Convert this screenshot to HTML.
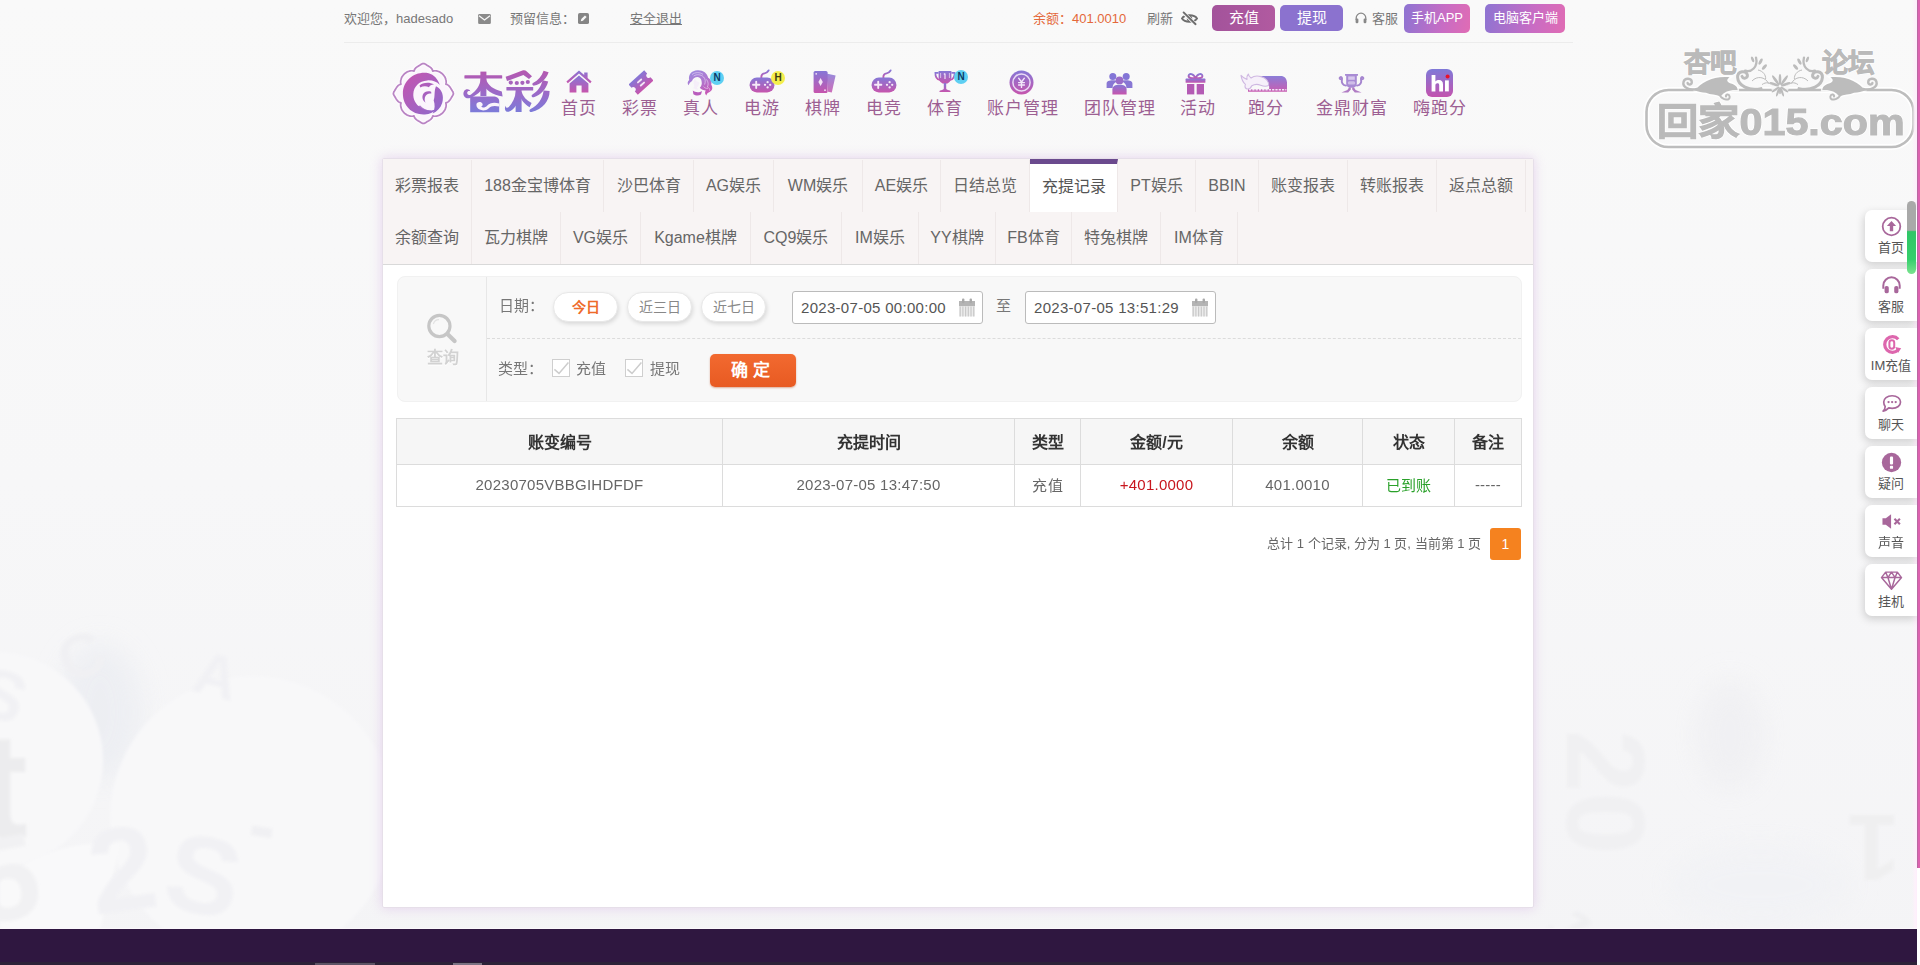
<!DOCTYPE html>
<html lang="zh-CN">
<head>
<meta charset="utf-8">
<title>充提记录</title>
<style>
*{box-sizing:border-box;margin:0;padding:0}
html,body{width:1920px;height:965px;overflow:hidden}
body{position:relative;background:#f8f8f8;font-family:"Liberation Sans",sans-serif;color:#666;font-size:13px}
.abs{position:absolute}
a{color:inherit;text-decoration:none}
/* ---------- top bar ---------- */
#topbar{position:absolute;left:345px;top:0;width:1228px;height:43px}
#topbar:after{content:"";position:absolute;left:-1px;top:42px;width:1229px;height:1px;background:#ececec}
#topbar .t{position:absolute;top:10.5px;height:16px;line-height:16px;font-size:13px;color:#777;white-space:nowrap}
.tbtn{position:absolute;top:5px;height:26px;line-height:26px;border-radius:5px;color:#fff;font-size:15px;text-align:center;white-space:nowrap}
/* ---------- nav ---------- */
.nav{position:absolute;top:98.5px;height:20px;line-height:20px;font-size:17px;letter-spacing:1px;color:#9d5f93;white-space:nowrap;transform:translateX(-50%)}
.nico{position:absolute}
.badge{position:absolute;width:14px;height:14px;border-radius:7px;font-size:10px;font-weight:bold;line-height:14px;text-align:center}
/* ---------- panel ---------- */
#panel{position:absolute;left:382px;top:158px;width:1152px;height:750px;background:#fff;border:1px solid #e6dfe9;border-radius:2px;box-shadow:0 0 12px rgba(205,160,222,.42)}
#tabs{position:absolute;left:0;top:0;width:1150px;height:106px;background:#f8f4f4;border-bottom:1px solid #d9d9d9}
.tab{position:absolute;height:52px;line-height:52px;font-size:16px;color:#666;text-align:center;border-right:1px solid #eee8e8;white-space:nowrap}
.tab.r1{top:1px}
.tab.r2{top:53px}
.tab.on{background:#fff;border-top:5px solid #6b4a8e;top:0;height:53px;line-height:45px;color:#555}
/* ---------- filter ---------- */
#filter{position:absolute;left:14px;top:117px;width:1125px;height:126px;background:#f8f8f8;border-radius:8px;border:1px solid #f1f1f1}
#filter .lcell{position:absolute;left:0;top:0;width:89px;height:124px;border-right:1px solid #e7e7e7}
#filter .dash{position:absolute;left:89px;top:61px;width:1034px;border-top:1px dashed #dcdcdc}
.lbl{position:absolute;font-size:15px;color:#777;white-space:nowrap;line-height:20px}
.pill{position:absolute;top:15px;height:30px;line-height:28px;width:65px;border-radius:15px;background:#fff;border:1px solid #e8e8e8;box-shadow:1px 2px 4px rgba(0,0,0,.13);font-size:14px;text-align:center;color:#888}
.inp{position:absolute;top:14px;height:33px;width:191px;background:#fff;border:1px solid #bbb;border-radius:3px;font-size:15px;line-height:31px;padding-left:8px;color:#555;white-space:nowrap;letter-spacing:.3px}
.cal{position:absolute;right:7px;top:6px}
.cb{position:absolute;top:82px;width:18px;height:18px;background:#fff;border:1px solid #cfcfcf}
#ok{position:absolute;left:312px;top:77px;width:86px;height:33px;border-radius:5px;background:linear-gradient(#f26a30,#e85a22);color:#fff;font-size:17px;font-weight:bold;line-height:33px;text-align:center;letter-spacing:5px;text-indent:0;box-shadow:0 1px 2px rgba(180,60,10,.4)}
/* ---------- table ---------- */
#tbl{position:absolute;left:13px;top:259px;width:1125px;border-collapse:collapse;table-layout:fixed}
#tbl th{height:46px;padding-bottom:2px;background:#f6f6f6;border:1px solid #dcdcdc;font-size:16px;color:#333;font-weight:bold;text-align:center}
#tbl td{height:42px;padding-bottom:2px;letter-spacing:.25px;border:1px solid #dcdcdc;font-size:15px;color:#666;text-align:center;background:#fff}
.wmt{position:absolute;font-weight:bold;color:#bababa;white-space:nowrap;text-shadow:0 0 2px #fff,1px 1px 0 #fff,-1px -1px 0 #fff,1px -1px 0 #fff,-1px 1px 0 #fff}
/* ---------- sidebar ---------- */
.sb{position:absolute;left:1865px;width:52px;height:52px;z-index:3;background:#fff;border-radius:7px 0 0 7px;box-shadow:-1px 3px 8px rgba(0,0,0,.17)}
.sb span{position:absolute;left:0;width:52px;top:30px;text-align:center;font-size:13px;line-height:16px;color:#555;white-space:nowrap}
.sb svg{position:absolute;left:50%;top:6px;margin-left:-10.5px;width:21px;height:21px}
</style>
</head>
<body>
<svg width="0" height="0" style="position:absolute"><defs>
<linearGradient id="g" x1="0" y1="0" x2="0" y2="1"><stop offset="0" stop-color="#8677d6"/><stop offset="1" stop-color="#c655ad"/></linearGradient>
<linearGradient id="gl" x1="0" y1="0" x2="1" y2="1"><stop offset="0" stop-color="#c95bb0"/><stop offset="1" stop-color="#8a76d4"/></linearGradient>
<linearGradient id="gt" x1="0" y1="0" x2="0" y2="1"><stop offset="0" stop-color="#b657a8"/><stop offset="1" stop-color="#7f79d8"/></linearGradient>
</defs></svg>
<!-- BACKGROUND -->
<svg class="abs" style="left:0;top:0;z-index:0" width="1920" height="965" viewBox="0 0 1920 965">
  <defs>
    <linearGradient id="bgv" x1="0" y1="0" x2="0" y2="1"><stop offset="0" stop-color="#f9f9f9"/><stop offset=".5" stop-color="#f7f7f8"/><stop offset="1" stop-color="#f4f4f6"/></linearGradient>
    <filter id="b6" x="-30%" y="-30%" width="160%" height="160%"><feGaussianBlur stdDeviation="6"/></filter>
    <filter id="b2" x="-30%" y="-30%" width="160%" height="160%"><feGaussianBlur stdDeviation="1.6"/></filter>
    <filter id="b14" x="-30%" y="-30%" width="160%" height="160%"><feGaussianBlur stdDeviation="14"/></filter>
  </defs>
  <rect width="1920" height="965" fill="url(#bgv)"/>
  <!-- left -->
  <ellipse cx="100" cy="712" rx="42" ry="68" fill="#ebedf2" filter="url(#b14)" opacity=".8"/>
  <circle cx="-5" cy="760" r="108" fill="#f8f8f9" filter="url(#b2)"/>
  <circle cx="252" cy="818" r="142" fill="#f8f8f9" filter="url(#b2)"/>
  <path d="M0 880 C40 850 80 840 120 845 L100 929 H0 Z" fill="#f9f9fa" filter="url(#b2)"/>
  <g font-family="Liberation Sans, sans-serif" font-weight="bold" fill="#efeff1" filter="url(#b2)">
    <text x="-22" y="838" font-size="150" fill="#ececee">t</text>
    <text transform="translate(70 685) rotate(-25)" font-size="62" fill="#f0f0f3">C</text>
    <text transform="translate(190 690) rotate(15)" font-size="60" fill="#f1f1f4">A</text>
    <text transform="translate(95 915) rotate(-8)" font-size="120" fill="#f1f1f4">2</text>
    <text transform="translate(160 905) rotate(12)" font-size="110" fill="#f1f1f4">S</text>
    <text transform="translate(245 850) rotate(10)" font-size="80" fill="#f0f0f3">-</text>
    <text transform="translate(-20 925) rotate(-10)" font-size="120" fill="#f1f1f3">5</text>
    <text transform="translate(-28 710) rotate(20)" font-size="70" fill="#f1f1f4">S</text>
  </g>
  <!-- right -->
  <ellipse cx="1730" cy="735" rx="34" ry="55" fill="#efeff2" filter="url(#b14)" opacity=".8"/>
  <ellipse cx="1760" cy="885" rx="90" ry="40" fill="#f1f2f5" filter="url(#b14)" opacity=".8"/>
  <g font-family="Liberation Sans, sans-serif" font-weight="bold" fill="#f0f0f2" filter="url(#b2)">
    <text transform="translate(1567 730) rotate(90)" font-size="112">20</text>
    <text transform="translate(1900 815) rotate(180)" font-size="95" fill="#efeff0">1</text>
    <text transform="translate(1545 925) rotate(60)" font-size="60" fill="#efeff1">1</text>
  </g>
</svg>
<!-- top bar -->
<div id="topbar">
  <div class="t" style="left:-1px">欢迎您，hadesado</div>

  <!-- envelope -->
  <svg class="abs" style="left:133px;top:14px" width="13" height="10" viewBox="0 0 14 11"><rect x="0" y="0" width="14" height="11" rx="1.5" fill="#8a8a8a"/><path d="M1 2 L7 6.6 L13 2" fill="none" stroke="#f8f8f8" stroke-width="1.4"/></svg>
  <!-- edit -->
  <svg class="abs" style="left:233px;top:13px" width="11" height="11" viewBox="0 0 12 12"><rect width="12" height="12" rx="2" fill="#858585"/><path d="M3 9 L3.6 6.6 L7.6 2.6 L9.4 4.4 L5.4 8.4 Z" fill="#f8f8f8"/></svg>
  <!-- eye slash -->
  <svg class="abs" style="left:836px;top:11px" width="17" height="15" viewBox="0 0 17 15"><path d="M1 7.5 C3.5 3.2 13.5 3.2 16 7.5 C13.5 11.8 3.5 11.8 1 7.5 Z" fill="none" stroke="#6d6d6d" stroke-width="1.9"/><circle cx="8.5" cy="7.5" r="2.7" fill="#6d6d6d"/><path d="M2.2 1.6 L14.8 13.4" stroke="#f8f8f8" stroke-width="3.4"/><path d="M2.6 1.4 L14.6 13.2" stroke="#6d6d6d" stroke-width="1.9" stroke-linecap="round"/></svg>
  <!-- headset -->
  <svg class="abs" style="left:1010px;top:12px" width="12" height="12" viewBox="0 0 12 12"><path d="M1.2 8 V6 A4.8 4.8 0 0 1 10.8 6 V8" fill="none" stroke="#888" stroke-width="1.3"/><rect x="0.6" y="6.6" width="2.8" height="4.6" rx="1.2" fill="#888"/><rect x="8.6" y="6.6" width="2.8" height="4.6" rx="1.2" fill="#888"/></svg>
  <div class="t" style="left:165px">预留信息：</div>
  <div class="t" style="left:285px;text-decoration:underline">安全退出</div>
  <div class="t" style="left:688px;color:#e4683a">余额：401.0010</div>
  <div class="t" style="left:802px">刷新</div>
  <div class="tbtn" style="left:867px;width:63px;background:linear-gradient(90deg,#a3539b,#b15aa0)">充值</div>
  <div class="tbtn" style="left:935px;width:63px;background:#8b72cf">提现</div>
  <div class="t" style="left:1027px">客服</div>
  <div class="tbtn" style="left:1059px;top:4px;width:66px;height:29px;line-height:27px;font-size:13px;background:linear-gradient(100deg,#8d74d2,#c86cc4 60%,#e06cb4)">手机APP</div>
  <div class="tbtn" style="left:1140px;top:4px;width:80px;height:29px;line-height:27px;font-size:13px;background:linear-gradient(100deg,#8d74d2,#c86cc4 60%,#e06cb4)">电脑客户端</div>
</div>

<!-- LOGO -->
<svg class="abs" style="left:390px;top:60px" width="164" height="68" viewBox="0 0 164 68">
  <defs><linearGradient id="lt" gradientUnits="userSpaceOnUse" x1="0" y1="11" x2="0" y2="52"><stop offset="0" stop-color="#b458b0"/><stop offset=".55" stop-color="#9a6ac8"/><stop offset="1" stop-color="#7c7bd9"/></linearGradient>
  <linearGradient id="le" gradientUnits="userSpaceOnUse" x1="14" y1="14" x2="52" y2="54"><stop offset="0" stop-color="#c456b0"/><stop offset="1" stop-color="#8f68cc"/></linearGradient></defs>
  <g transform="translate(33.4 33.5) scale(.968) translate(-33.4 -33.5)">
  <path d="M33.4 2.5 L33.9 2.6 L34.5 2.7 L35.0 3.0 L35.5 3.2 L36.0 3.6 L36.5 3.9 L37.0 4.2 L37.5 4.5 L37.9 4.8 L38.4 5.0 L38.9 5.3 L39.3 5.6 L39.8 5.9 L40.2 6.2 L40.6 6.5 L41.0 6.9 L41.4 7.2 L41.8 7.7 L42.1 8.1 L42.5 8.6 L42.7 9.2 L42.9 10.0 L43.2 10.4 L43.8 10.2 L44.3 10.1 L44.9 10.0 L45.4 10.0 L45.9 10.0 L46.4 10.1 L46.9 10.1 L47.4 10.2 L47.9 10.4 L48.3 10.5 L48.8 10.7 L49.3 10.8 L49.7 11.0 L50.2 11.2 L50.6 11.5 L51.0 11.7 L51.4 12.0 L51.8 12.3 L52.2 12.6 L52.6 12.9 L53.0 13.2 L53.3 13.6 L53.7 13.9 L54.0 14.3 L54.3 14.7 L54.6 15.1 L54.9 15.5 L55.2 15.9 L55.4 16.3 L55.7 16.7 L55.9 17.2 L56.1 17.6 L56.2 18.1 L56.4 18.6 L56.5 19.0 L56.7 19.5 L56.8 20.0 L56.8 20.5 L56.9 21.0 L56.9 21.5 L56.9 22.0 L56.8 22.6 L56.7 23.1 L56.5 23.7 L56.9 24.0 L57.7 24.2 L58.3 24.4 L58.8 24.8 L59.2 25.1 L59.7 25.5 L60.0 25.9 L60.4 26.3 L60.7 26.7 L61.0 27.1 L61.3 27.6 L61.6 28.0 L61.9 28.5 L62.1 29.0 L62.4 29.4 L62.7 29.9 L63.0 30.4 L63.3 30.9 L63.7 31.4 L63.9 31.9 L64.2 32.4 L64.3 33.0 L64.4 33.5 L64.3 34.0 L64.2 34.6 L63.9 35.1 L63.7 35.6 L63.3 36.1 L63.0 36.6 L62.7 37.1 L62.4 37.6 L62.1 38.0 L61.9 38.5 L61.6 39.0 L61.3 39.4 L61.0 39.9 L60.7 40.3 L60.4 40.7 L60.0 41.1 L59.7 41.5 L59.2 41.9 L58.8 42.2 L58.3 42.6 L57.7 42.8 L56.9 43.0 L56.5 43.3 L56.7 43.9 L56.8 44.4 L56.9 45.0 L56.9 45.5 L56.9 46.0 L56.8 46.5 L56.8 47.0 L56.7 47.5 L56.5 48.0 L56.4 48.4 L56.2 48.9 L56.1 49.4 L55.9 49.8 L55.7 50.3 L55.4 50.7 L55.2 51.1 L54.9 51.5 L54.6 51.9 L54.3 52.3 L54.0 52.7 L53.7 53.1 L53.3 53.4 L53.0 53.8 L52.6 54.1 L52.2 54.4 L51.8 54.7 L51.4 55.0 L51.0 55.3 L50.6 55.5 L50.2 55.8 L49.7 56.0 L49.3 56.2 L48.8 56.3 L48.3 56.5 L47.9 56.6 L47.4 56.8 L46.9 56.9 L46.4 56.9 L45.9 57.0 L45.4 57.0 L44.9 57.0 L44.3 56.9 L43.8 56.8 L43.2 56.6 L42.9 57.0 L42.7 57.8 L42.5 58.4 L42.1 58.9 L41.8 59.3 L41.4 59.8 L41.0 60.1 L40.6 60.5 L40.2 60.8 L39.8 61.1 L39.3 61.4 L38.9 61.7 L38.4 62.0 L37.9 62.2 L37.5 62.5 L37.0 62.8 L36.5 63.1 L36.0 63.4 L35.5 63.8 L35.0 64.0 L34.5 64.3 L33.9 64.4 L33.4 64.5 L32.9 64.4 L32.3 64.3 L31.8 64.0 L31.3 63.8 L30.8 63.4 L30.3 63.1 L29.8 62.8 L29.3 62.5 L28.9 62.2 L28.4 62.0 L27.9 61.7 L27.5 61.4 L27.0 61.1 L26.6 60.8 L26.2 60.5 L25.8 60.1 L25.4 59.8 L25.0 59.3 L24.7 58.9 L24.3 58.4 L24.1 57.8 L23.9 57.0 L23.6 56.6 L23.0 56.8 L22.5 56.9 L21.9 57.0 L21.4 57.0 L20.9 57.0 L20.4 56.9 L19.9 56.9 L19.4 56.8 L18.9 56.6 L18.5 56.5 L18.0 56.3 L17.5 56.2 L17.1 56.0 L16.6 55.8 L16.2 55.5 L15.8 55.3 L15.4 55.0 L15.0 54.7 L14.6 54.4 L14.2 54.1 L13.8 53.8 L13.5 53.4 L13.1 53.1 L12.8 52.7 L12.5 52.3 L12.2 51.9 L11.9 51.5 L11.6 51.1 L11.4 50.7 L11.1 50.3 L10.9 49.8 L10.7 49.4 L10.6 48.9 L10.4 48.4 L10.3 48.0 L10.1 47.5 L10.0 47.0 L10.0 46.5 L9.9 46.0 L9.9 45.5 L9.9 45.0 L10.0 44.4 L10.1 43.9 L10.3 43.3 L9.9 43.0 L9.1 42.8 L8.5 42.6 L8.0 42.2 L7.6 41.9 L7.1 41.5 L6.8 41.1 L6.4 40.7 L6.1 40.3 L5.8 39.9 L5.5 39.4 L5.2 39.0 L4.9 38.5 L4.7 38.0 L4.4 37.6 L4.1 37.1 L3.8 36.6 L3.5 36.1 L3.1 35.6 L2.9 35.1 L2.6 34.6 L2.5 34.0 L2.4 33.5 L2.5 33.0 L2.6 32.4 L2.9 31.9 L3.1 31.4 L3.5 30.9 L3.8 30.4 L4.1 29.9 L4.4 29.4 L4.7 29.0 L4.9 28.5 L5.2 28.0 L5.5 27.6 L5.8 27.1 L6.1 26.7 L6.4 26.3 L6.8 25.9 L7.1 25.5 L7.6 25.1 L8.0 24.8 L8.5 24.4 L9.1 24.2 L9.9 24.0 L10.3 23.7 L10.1 23.1 L10.0 22.6 L9.9 22.0 L9.9 21.5 L9.9 21.0 L10.0 20.5 L10.0 20.0 L10.1 19.5 L10.3 19.0 L10.4 18.6 L10.6 18.1 L10.7 17.6 L10.9 17.2 L11.1 16.7 L11.4 16.3 L11.6 15.9 L11.9 15.5 L12.2 15.1 L12.5 14.7 L12.8 14.3 L13.1 13.9 L13.5 13.6 L13.8 13.2 L14.2 12.9 L14.6 12.6 L15.0 12.3 L15.4 12.0 L15.8 11.7 L16.2 11.5 L16.6 11.2 L17.1 11.0 L17.5 10.8 L18.0 10.7 L18.5 10.5 L18.9 10.4 L19.4 10.2 L19.9 10.1 L20.4 10.1 L20.9 10.0 L21.4 10.0 L21.9 10.0 L22.5 10.1 L23.0 10.2 L23.6 10.4 L23.9 10.0 L24.1 9.2 L24.3 8.6 L24.7 8.1 L25.0 7.7 L25.4 7.2 L25.8 6.9 L26.2 6.5 L26.6 6.2 L27.0 5.9 L27.5 5.6 L27.9 5.3 L28.4 5.0 L28.9 4.8 L29.3 4.5 L29.8 4.2 L30.3 3.9 L30.8 3.6 L31.3 3.2 L31.8 3.0 L32.3 2.7 L32.9 2.6 Z" fill="#fbf5fc" stroke="#fdfafd" stroke-width="4.5" stroke-linejoin="round"/>
  <path d="M33.4 2.5 L33.9 2.6 L34.5 2.7 L35.0 3.0 L35.5 3.2 L36.0 3.6 L36.5 3.9 L37.0 4.2 L37.5 4.5 L37.9 4.8 L38.4 5.0 L38.9 5.3 L39.3 5.6 L39.8 5.9 L40.2 6.2 L40.6 6.5 L41.0 6.9 L41.4 7.2 L41.8 7.7 L42.1 8.1 L42.5 8.6 L42.7 9.2 L42.9 10.0 L43.2 10.4 L43.8 10.2 L44.3 10.1 L44.9 10.0 L45.4 10.0 L45.9 10.0 L46.4 10.1 L46.9 10.1 L47.4 10.2 L47.9 10.4 L48.3 10.5 L48.8 10.7 L49.3 10.8 L49.7 11.0 L50.2 11.2 L50.6 11.5 L51.0 11.7 L51.4 12.0 L51.8 12.3 L52.2 12.6 L52.6 12.9 L53.0 13.2 L53.3 13.6 L53.7 13.9 L54.0 14.3 L54.3 14.7 L54.6 15.1 L54.9 15.5 L55.2 15.9 L55.4 16.3 L55.7 16.7 L55.9 17.2 L56.1 17.6 L56.2 18.1 L56.4 18.6 L56.5 19.0 L56.7 19.5 L56.8 20.0 L56.8 20.5 L56.9 21.0 L56.9 21.5 L56.9 22.0 L56.8 22.6 L56.7 23.1 L56.5 23.7 L56.9 24.0 L57.7 24.2 L58.3 24.4 L58.8 24.8 L59.2 25.1 L59.7 25.5 L60.0 25.9 L60.4 26.3 L60.7 26.7 L61.0 27.1 L61.3 27.6 L61.6 28.0 L61.9 28.5 L62.1 29.0 L62.4 29.4 L62.7 29.9 L63.0 30.4 L63.3 30.9 L63.7 31.4 L63.9 31.9 L64.2 32.4 L64.3 33.0 L64.4 33.5 L64.3 34.0 L64.2 34.6 L63.9 35.1 L63.7 35.6 L63.3 36.1 L63.0 36.6 L62.7 37.1 L62.4 37.6 L62.1 38.0 L61.9 38.5 L61.6 39.0 L61.3 39.4 L61.0 39.9 L60.7 40.3 L60.4 40.7 L60.0 41.1 L59.7 41.5 L59.2 41.9 L58.8 42.2 L58.3 42.6 L57.7 42.8 L56.9 43.0 L56.5 43.3 L56.7 43.9 L56.8 44.4 L56.9 45.0 L56.9 45.5 L56.9 46.0 L56.8 46.5 L56.8 47.0 L56.7 47.5 L56.5 48.0 L56.4 48.4 L56.2 48.9 L56.1 49.4 L55.9 49.8 L55.7 50.3 L55.4 50.7 L55.2 51.1 L54.9 51.5 L54.6 51.9 L54.3 52.3 L54.0 52.7 L53.7 53.1 L53.3 53.4 L53.0 53.8 L52.6 54.1 L52.2 54.4 L51.8 54.7 L51.4 55.0 L51.0 55.3 L50.6 55.5 L50.2 55.8 L49.7 56.0 L49.3 56.2 L48.8 56.3 L48.3 56.5 L47.9 56.6 L47.4 56.8 L46.9 56.9 L46.4 56.9 L45.9 57.0 L45.4 57.0 L44.9 57.0 L44.3 56.9 L43.8 56.8 L43.2 56.6 L42.9 57.0 L42.7 57.8 L42.5 58.4 L42.1 58.9 L41.8 59.3 L41.4 59.8 L41.0 60.1 L40.6 60.5 L40.2 60.8 L39.8 61.1 L39.3 61.4 L38.9 61.7 L38.4 62.0 L37.9 62.2 L37.5 62.5 L37.0 62.8 L36.5 63.1 L36.0 63.4 L35.5 63.8 L35.0 64.0 L34.5 64.3 L33.9 64.4 L33.4 64.5 L32.9 64.4 L32.3 64.3 L31.8 64.0 L31.3 63.8 L30.8 63.4 L30.3 63.1 L29.8 62.8 L29.3 62.5 L28.9 62.2 L28.4 62.0 L27.9 61.7 L27.5 61.4 L27.0 61.1 L26.6 60.8 L26.2 60.5 L25.8 60.1 L25.4 59.8 L25.0 59.3 L24.7 58.9 L24.3 58.4 L24.1 57.8 L23.9 57.0 L23.6 56.6 L23.0 56.8 L22.5 56.9 L21.9 57.0 L21.4 57.0 L20.9 57.0 L20.4 56.9 L19.9 56.9 L19.4 56.8 L18.9 56.6 L18.5 56.5 L18.0 56.3 L17.5 56.2 L17.1 56.0 L16.6 55.8 L16.2 55.5 L15.8 55.3 L15.4 55.0 L15.0 54.7 L14.6 54.4 L14.2 54.1 L13.8 53.8 L13.5 53.4 L13.1 53.1 L12.8 52.7 L12.5 52.3 L12.2 51.9 L11.9 51.5 L11.6 51.1 L11.4 50.7 L11.1 50.3 L10.9 49.8 L10.7 49.4 L10.6 48.9 L10.4 48.4 L10.3 48.0 L10.1 47.5 L10.0 47.0 L10.0 46.5 L9.9 46.0 L9.9 45.5 L9.9 45.0 L10.0 44.4 L10.1 43.9 L10.3 43.3 L9.9 43.0 L9.1 42.8 L8.5 42.6 L8.0 42.2 L7.6 41.9 L7.1 41.5 L6.8 41.1 L6.4 40.7 L6.1 40.3 L5.8 39.9 L5.5 39.4 L5.2 39.0 L4.9 38.5 L4.7 38.0 L4.4 37.6 L4.1 37.1 L3.8 36.6 L3.5 36.1 L3.1 35.6 L2.9 35.1 L2.6 34.6 L2.5 34.0 L2.4 33.5 L2.5 33.0 L2.6 32.4 L2.9 31.9 L3.1 31.4 L3.5 30.9 L3.8 30.4 L4.1 29.9 L4.4 29.4 L4.7 29.0 L4.9 28.5 L5.2 28.0 L5.5 27.6 L5.8 27.1 L6.1 26.7 L6.4 26.3 L6.8 25.9 L7.1 25.5 L7.6 25.1 L8.0 24.8 L8.5 24.4 L9.1 24.2 L9.9 24.0 L10.3 23.7 L10.1 23.1 L10.0 22.6 L9.9 22.0 L9.9 21.5 L9.9 21.0 L10.0 20.5 L10.0 20.0 L10.1 19.5 L10.3 19.0 L10.4 18.6 L10.6 18.1 L10.7 17.6 L10.9 17.2 L11.1 16.7 L11.4 16.3 L11.6 15.9 L11.9 15.5 L12.2 15.1 L12.5 14.7 L12.8 14.3 L13.1 13.9 L13.5 13.6 L13.8 13.2 L14.2 12.9 L14.6 12.6 L15.0 12.3 L15.4 12.0 L15.8 11.7 L16.2 11.5 L16.6 11.2 L17.1 11.0 L17.5 10.8 L18.0 10.7 L18.5 10.5 L18.9 10.4 L19.4 10.2 L19.9 10.1 L20.4 10.1 L20.9 10.0 L21.4 10.0 L21.9 10.0 L22.5 10.1 L23.0 10.2 L23.6 10.4 L23.9 10.0 L24.1 9.2 L24.3 8.6 L24.7 8.1 L25.0 7.7 L25.4 7.2 L25.8 6.9 L26.2 6.5 L26.6 6.2 L27.0 5.9 L27.5 5.6 L27.9 5.3 L28.4 5.0 L28.9 4.8 L29.3 4.5 L29.8 4.2 L30.3 3.9 L30.8 3.6 L31.3 3.2 L31.8 3.0 L32.3 2.7 L32.9 2.6 Z" fill="none" stroke="#b984c4" stroke-width="1.8" stroke-linejoin="round"/>
  <!-- swirl G -->
  <g fill="url(#le)">
  <path d="M38.8 12.6 C25.4 10 12.2 19.2 12.2 33.6 C12.2 46.8 22.4 56 35 55.2 C40 54.8 44.4 52.6 47.6 49.2 C42 52 35.6 51.6 30.6 48.2 C25.4 44.8 22.6 39.6 23 33.8 C23.4 26.4 28.8 20.6 37.4 20 C42.4 19.6 47 21.2 50.4 24.6 C48.2 18.4 44.2 14 38.8 12.6 Z"/>
  <path d="M29.4 25.2 C32.6 22 39.4 21.4 44.4 24 C41.6 24.4 40 25.4 39.2 27 C36.4 25.6 33 25.6 30.2 27.4 Z"/>
  <path d="M41.4 31.6 C38 30.4 34.4 31.4 33 34.4 C31.6 37.6 32.8 41.2 35.6 43 C34.4 40.6 34.4 38 35.6 36 C36.8 34 39 33 41.6 33.6 Z"/>
  <path d="M46.4 26 C52.6 29 55 36 52.8 43.4 C51.2 48.4 47.6 52.2 43 54.2 C45.6 49.8 45.4 45 44 40.6 C45.6 36.4 44.2 31.4 46.4 26 Z"/>
  <path d="M26 47.4 C30 52.4 37 53.4 42 51 C37.6 51.6 33 49.6 30 46 Z" opacity=".85"/>
  </g>
  </g>
  <!-- 杏 -->
  <g fill="url(#lt)" stroke="none">
    <rect x="74.4" y="15.2" width="37.8" height="3.4" rx=".6"/>
    <rect x="90.4" y="11.6" width="6" height="24.4"/>
    <path d="M90.8 19 C89.8 25.6 86.2 31 81 34.4 C79 35.6 77 34.8 77.2 32.6 C77.4 31 79 30.4 80.4 31.4 C79.6 28.6 75.6 28.4 74 31.2 C72 35 75.2 39.4 80 38 C88.4 35.4 94.4 28 96.4 19.6 Z"/>
    <path d="M96 19.6 C98 25.4 103.4 29.6 111.8 31.4 L112.6 36.4 C102.6 35.2 95.6 30.6 93 23.6 Z"/>
    <path d="M80.2 36.4 H103 C107 36.4 109.2 38.4 109.2 41.2 V52.2 H80.2 Z"/>
  </g>
  <path d="M86.4 44.8 C86.4 42 90.4 41 92.2 43.2 C93.2 44.6 92.6 46.2 91.2 46.4 C92.2 48 95 47.8 96.8 46 C99.8 42.8 104 42 109.2 43.6 V46.6 C104.8 45.4 101 45.8 98.8 48.2 C95.6 51.4 89.4 51 87.2 47.6 C86.6 46.8 86.4 45.8 86.4 44.8 Z" fill="#f9f4fb"/>
  <!-- 彩 -->
  <g fill="url(#lt)">
    <path d="M115.6 16.8 L132.4 10.6 C134.2 10 135.6 10.4 136.8 11.6 L142 16.2 L139 19 L133.4 15 L117 21 Z"/>
    <circle cx="120.8" cy="22.6" r="2.1"/><circle cx="126.8" cy="23" r="2.1"/><circle cx="132.4" cy="22.8" r="2.1"/><circle cx="137.8" cy="22" r="2.1"/>
    <rect x="116.4" y="27" width="26.8" height="3.5" rx=".6"/>
    <rect x="125.6" y="27" width="6" height="25"/>
    <path d="M126 31 C125.2 37.6 122.6 43 118.8 47 C117.2 48.6 115.4 47.6 116 45.4 C113.8 48 115 52.4 118.8 51.8 C124.6 50.2 129.4 41.6 131 32.6 Z"/>
    <path d="M131.4 31.4 C133 36.4 136.4 40.2 141.6 43 L139.6 47.2 C134.2 44 130.6 39.4 129.2 34 Z"/>
    <path d="M153.6 10.8 L158.6 12.2 C156 19.6 150.6 24 144.4 25.6 C142.4 26 141.6 23.6 143.4 22.8 C148 20.4 151.6 16.4 153.6 10.8 Z"/>
    <path d="M152.6 20.2 L158.2 21.4 C156 29.4 150.6 35 143.8 37.2 C141.6 37.8 140.8 35.2 142.8 34.2 C147.6 31.4 151 26.6 152.6 20.2 Z"/>
    <path d="M153.6 30.6 L159.6 31 C159.6 41 152.6 49.2 141.6 52 C139.4 52.4 138.6 50 140.6 49 C148 45.4 152.6 39 153.6 30.6 Z"/>
  </g>
</svg>
<!-- NAV -->
<div id="nav">

  <!-- home -->
  <svg class="nico" style="left:566px;top:70px" width="26" height="23" viewBox="0 0 26 23"><path d="M13 0.5 L18.2 5 V2.4 H21.6 V8 L25.6 11.6 L24.2 13.2 L13 3.6 L1.8 13.2 L0.4 11.6 Z" fill="url(#g)"/><path d="M13 5.6 L22.4 13.6 V22.4 H15.6 V15.4 H10.4 V22.4 H3.6 V13.6 Z" fill="url(#g)"/></svg>
  <!-- ticket -->
  <svg class="nico" style="left:629px;top:70px" width="24" height="25" viewBox="0 0 26 27"><g transform="rotate(-42 13 13.5)"><path d="M1.6 6 H24.4 V10.8 A2.6 2.6 0 0 0 24.4 16.2 V21 H1.6 V16.2 A2.6 2.6 0 0 0 1.6 10.8 Z" fill="url(#g)"/><rect x="9.6" y="10.2" width="6.8" height="2" rx="1" fill="#f3e6f6"/><rect x="9.6" y="14.8" width="6.8" height="2" rx="1" fill="#f3e6f6"/></g></svg>
  <!-- woman -->
  <svg class="nico" style="left:686px;top:69px" width="28" height="29" viewBox="0 0 28 29"><defs><linearGradient id="gw" x1="0" y1="0" x2=".6" y2="1"><stop offset="0" stop-color="#9c8de2"/><stop offset=".55" stop-color="#ad78d0"/><stop offset="1" stop-color="#c659b6"/></linearGradient></defs>
  <path d="M11.6 1.2 C5.4 1.4 2 6 3.2 11 C1.4 12.4 1.2 14.6 2.6 16.2 C3.4 14 4.8 12.8 6 12 C7 9.4 9 8 11.6 8 C14 8.4 15.4 10.2 15.6 12.4 C16.2 15 15.4 17.2 13.8 18.8 C15.4 20.6 17.6 21.4 19.8 21.6 C18.6 23.2 18.8 25 20.4 26.6 C20.6 24.8 21.6 23.8 23.2 23.2 C26.4 21.8 27.2 18.6 25.2 15.8 C26.2 12.6 24.6 10 22.2 8.8 C21.2 4 17.2 1 11.6 1.2 Z" fill="url(#gw)"/>
  <path d="M6.8 21.6 C9.2 23.6 13.4 23.8 16 22 L15 25.6 C12.4 27 9.4 26.6 7.4 25.2 Z" fill="#b95cbc"/>
  <path d="M8.8 9.6 C9.6 12 11.4 13 13.4 13.2 C13.2 15.4 12.4 17.4 10.8 18.6 L12.2 20.4 C10.2 20.8 8.2 20 7.2 18.8 L8.4 17.4 C7.2 15.4 7.4 12.2 8.8 9.6 Z" fill="#f3eafa" opacity=".7"/>
  <path d="M6 5.6 C9 3 14 3 17 5.4 M7.6 7 C10.6 5 15 5.4 17.6 8 C19.6 10 19.6 13 18.6 15.6 M20.4 10.4 C22.4 12.6 22.6 15.6 21.4 18 C23 18.6 24 20 23.6 21.6 M17.6 17.6 C18.6 19 20.4 19.6 22 19.4" fill="none" stroke="#efe4fa" stroke-width=".8" opacity=".7"/></svg>
  <div class="badge" style="left:710px;top:71px;background:#5ecff2;color:#0b3a66">N</div>
  <!-- gamepad 1 -->
  <svg class="nico" style="left:749px;top:69px" width="26" height="24" viewBox="0 0 26 24"><path d="M12.4 9 C12 6 13.6 4.6 15.6 4.4 C17.6 4.2 18.6 3 19.6 1.4" fill="none" stroke="url(#g)" stroke-width="1.9" stroke-linecap="round"/><rect x="0.6" y="8.6" width="24.8" height="14.8" rx="7.2" fill="url(#g)"/><path d="M7.2 12.6 V19 M4 15.8 H10.4" stroke="#f6e9f8" stroke-width="1.9" stroke-linecap="round"/><circle cx="18.6" cy="13.2" r="1.15" fill="#f6e9f8"/><circle cx="18.6" cy="18.4" r="1.15" fill="#f6e9f8"/><circle cx="16" cy="15.8" r="1.15" fill="#f6e9f8"/><circle cx="21.2" cy="15.8" r="1.15" fill="#f6e9f8"/></svg>
  <div class="badge" style="left:771px;top:71px;background:#f4ee4c;color:#3b3b12">H</div>
  <!-- cards -->
  <svg class="nico" style="left:812px;top:70px" width="26" height="24" viewBox="0 0 26 24"><path d="M14.4 3.4 L23.6 5.4 L19.8 22.6 L16 21.8 Z" fill="url(#g)" opacity=".85"/><rect x="1.6" y="1" width="14" height="22" rx="1.6" fill="url(#g)"/><path d="M8.6 8 L10.8 12 L8.6 16 L6.4 12 Z" fill="#f3e4f6"/><circle cx="4.2" cy="3.8" r="0.9" fill="#f3e4f6"/><circle cx="13" cy="20.2" r="0.9" fill="#f3e4f6"/></svg>
  <!-- gamepad 2 -->
  <svg class="nico" style="left:871px;top:69px" width="26" height="24" viewBox="0 0 26 24"><path d="M12.4 9 C12 6 13.6 4.6 15.6 4.4 C17.6 4.2 18.6 3 19.6 1.4" fill="none" stroke="url(#g)" stroke-width="1.9" stroke-linecap="round"/><rect x="0.6" y="8.6" width="24.8" height="14.8" rx="7.2" fill="url(#g)"/><path d="M7.2 12.6 V19 M4 15.8 H10.4" stroke="#f6e9f8" stroke-width="1.9" stroke-linecap="round"/><circle cx="18.6" cy="13.2" r="1.15" fill="#f6e9f8"/><circle cx="18.6" cy="18.4" r="1.15" fill="#f6e9f8"/><circle cx="16" cy="15.8" r="1.15" fill="#f6e9f8"/><circle cx="21.2" cy="15.8" r="1.15" fill="#f6e9f8"/></svg>
  <!-- trophy -->
  <svg class="nico" style="left:934px;top:70px" width="22" height="23" viewBox="0 0 22 23"><path d="M4.6 1 H17.4 V7.4 A6.4 6.4 0 0 1 4.6 7.4 Z" fill="url(#g)"/><path d="M4.6 2.8 H1.4 C1.2 7 2.8 9.4 6 10 M17.4 2.8 H20.6 C20.8 7 19.2 9.4 16 10" fill="none" stroke="url(#g)" stroke-width="1.7"/><path d="M9.8 13 H12.2 V18.6 C12.2 19.6 13.4 20 15 20.2 C16.2 20.4 16.6 21 16.6 22 H5.4 C5.4 21 5.8 20.4 7 20.2 C8.6 20 9.8 19.6 9.8 18.6 Z" fill="url(#g)"/><path d="M11 3.4 V9 M9.8 4.4 L11 3.4" stroke="#f1e2f6" stroke-width="1.2" fill="none"/><path d="M6.6 3 V8 M15.4 3 V8" stroke="#f1e2f6" stroke-width="1" opacity=".7"/></svg>
  <div class="badge" style="left:954px;top:70px;background:#5ecff2;color:#0b3a66">N</div>
  <!-- coin -->
  <svg class="nico" style="left:1009px;top:70px" width="25" height="25" viewBox="0 0 25 25"><circle cx="12.5" cy="12.5" r="12" fill="url(#g)"/><circle cx="12.5" cy="12.5" r="8.6" fill="none" stroke="#eadcf6" stroke-width="1.5"/><path d="M9.6 8.2 L12.5 12 L15.4 8.2 M12.5 12 V17.4 M9.6 12.6 H15.4 M9.6 15 H15.4" fill="none" stroke="#f3e8fa" stroke-width="1.4" stroke-linecap="round"/></svg>
  <!-- team -->
  <svg class="nico" style="left:1106px;top:72px" width="27" height="23" viewBox="0 0 27 23"><circle cx="6.8" cy="4.4" r="3.5" fill="#8375d6"/><path d="M0.6 16 V11.6 C0.6 9.2 3 8.2 6.8 8.2 C9 8.2 10.6 8.6 11.4 9.6 C8 10.8 6.6 13 6.6 16 Z" fill="#8877d4"/><circle cx="20.2" cy="4.4" r="3.5" fill="#8375d6"/><path d="M26.4 16 V11.6 C26.4 9.2 24 8.2 20.2 8.2 C18 8.2 16.4 8.6 15.6 9.6 C19 10.8 20.4 13 20.4 16 Z" fill="#8877d4"/><circle cx="13.5" cy="8.4" r="3.9" fill="#9a6cc8"/><path d="M6.4 22.4 V17.4 C6.4 14.2 9.4 12.8 13.5 12.8 C17.6 12.8 20.6 14.2 20.6 17.4 V22.4 Z" fill="url(#g)"/></svg>
  <!-- gift -->
  <svg class="nico" style="left:1185px;top:72px" width="21" height="23" viewBox="0 0 21 23"><path d="M10.5 6.2 C8.6 1.4 3.8 1 3.6 3.8 C3.4 6 7 6.6 10.5 6.2 C14 6.6 17.6 6 17.4 3.8 C17.2 1 12.4 1.4 10.5 6.2 Z" fill="none" stroke="url(#g)" stroke-width="1.9"/><rect x="0.6" y="6.6" width="19.8" height="4.2" rx="0.6" fill="url(#g)"/><rect x="2" y="12" width="7.3" height="10.4" fill="#b45bb4"/><rect x="11.7" y="12" width="7.3" height="10.4" fill="#b45bb4"/></svg>
  <!-- rhino / paofen -->
  <svg class="nico" style="left:1240px;top:73px" width="48" height="20" viewBox="0 0 48 20"><path d="M20 3 H41.6 C44.8 3.4 46.8 6 47 9.4 V18.8 H8 V16.2 H29 C30 11.6 27.4 8 22.6 6.6 Z" fill="url(#g)" opacity=".95"/><path d="M1 2.4 C1.6 6.4 3 9.4 5.4 11.4 C4.6 13.4 5.2 15.2 7 16 C9.6 16.2 11 14.8 11.8 12.8 C14.4 11.2 17.6 11 20.6 12.2 C23.6 13.4 26 13.6 28.6 12.6 C29 8.6 26 5 21 3.6 C17 2.4 13.6 3 11 5 C9.6 4 8.6 2.6 8.4 1 C7 2.4 6.6 4.4 7 6.4 C5 5.6 2.6 4.4 1 2.4 Z" fill="#f6f0fa" stroke="#cfb8e2" stroke-width="1.1" stroke-linejoin="round"/><path d="M9 16.8 H46.4" stroke="#f3e8f8" stroke-width="1.5" stroke-dasharray="2.2 1.1"/></svg>
  <!-- ding -->
  <svg class="nico" style="left:1338px;top:73px" width="27" height="20" viewBox="0 0 27 20"><path d="M7 1 H20 V2.8 H18.8 V10.4 C18.8 13.4 16.6 14.8 13.5 14.8 C10.4 14.8 8.2 13.4 8.2 10.4 V2.8 H7 Z" fill="#a88bd4"/><rect x="10.2" y="3.4" width="6.6" height="3.4" fill="#e4d8f2" opacity=".8"/><rect x="9.8" y="8.2" width="7.4" height="3.4" rx="1.6" fill="#e4d8f2" opacity=".65"/><path d="M8 12.6 C4.6 12 3.2 9.4 4 6.4 C4.4 4.6 3.2 3.6 2.2 4.2 C1.2 4.8 1.6 6.2 2.8 6.2" fill="none" stroke="#a585cf" stroke-width="1.9" stroke-linecap="round"/><path d="M19 12.6 C22.4 12 23.8 9.4 23 6.4 C22.6 4.6 23.8 3.6 24.8 4.2 C25.8 4.8 25.4 6.2 24.2 6.2" fill="none" stroke="#a585cf" stroke-width="1.9" stroke-linecap="round"/><path d="M11 14.4 L9.4 17 L3.4 19.4 H10.2 L12.8 16.6 V14.6 Z M16 14.4 L17.6 17 L23.6 19.4 H16.8 L14.2 16.6 V14.6 Z" fill="#b07cc4"/></svg>
  <!-- hi -->
  <div class="nico" style="left:1426px;top:69px;width:27px;height:28px;border-radius:6px;background:linear-gradient(#7f79d8,#c353ae)"><svg width="27" height="28" viewBox="0 0 27 28"><path d="M5.6 6 H9.4 V12.4 C10.4 11.4 11.6 11 13 11 C15.6 11 17 12.6 17 15.4 V22.4 H13.2 V16.4 C13.2 14.8 12.6 14.2 11.4 14.2 C10.2 14.2 9.4 15 9.4 16.6 V22.4 H5.6 Z" fill="#fff"/><rect x="19" y="11.4" width="3.8" height="11" fill="#fff"/><circle cx="21.6" cy="7.4" r="2" fill="#e8122a"/></svg></div>
  <div class="nav" style="left:579px">首页</div>
  <div class="nav" style="left:640px">彩票</div>
  <div class="nav" style="left:701px">真人</div>
  <div class="nav" style="left:762px">电游</div>
  <div class="nav" style="left:823px">棋牌</div>
  <div class="nav" style="left:884px">电竞</div>
  <div class="nav" style="left:945px">体育</div>
  <div class="nav" style="left:1023px">账户管理</div>
  <div class="nav" style="left:1120px">团队管理</div>
  <div class="nav" style="left:1198px">活动</div>
  <div class="nav" style="left:1266px">跑分</div>
  <div class="nav" style="left:1352px">金鼎财富</div>
  <div class="nav" style="left:1440px">嗨跑分</div>
</div>

<!-- PANEL -->
<div id="panel">
  <div id="tabs">
    <div class="tab r1" style="left:0;width:89px">彩票报表</div>
    <div class="tab r1" style="left:89px;width:132px">188金宝博体育</div>
    <div class="tab r1" style="left:221px;width:90px">沙巴体育</div>
    <div class="tab r1" style="left:311px;width:80px">AG娱乐</div>
    <div class="tab r1" style="left:391px;width:89px">WM娱乐</div>
    <div class="tab r1" style="left:480px;width:78px">AE娱乐</div>
    <div class="tab r1" style="left:558px;width:89px">日结总览</div>
    <div class="tab r1 on" style="left:647px;width:88px">充提记录</div>
    <div class="tab r1" style="left:735px;width:78px">PT娱乐</div>
    <div class="tab r1" style="left:813px;width:63px">BBIN</div>
    <div class="tab r1" style="left:876px;width:89px">账变报表</div>
    <div class="tab r1" style="left:965px;width:89px">转账报表</div>
    <div class="tab r1" style="left:1054px;width:89px">返点总额</div>
    <div class="tab r2" style="left:0;width:89px">余额查询</div>
    <div class="tab r2" style="left:89px;width:89px">瓦力棋牌</div>
    <div class="tab r2" style="left:178px;width:80px">VG娱乐</div>
    <div class="tab r2" style="left:258px;width:110px">Kgame棋牌</div>
    <div class="tab r2" style="left:368px;width:91px">CQ9娱乐</div>
    <div class="tab r2" style="left:459px;width:77px">IM娱乐</div>
    <div class="tab r2" style="left:536px;width:77px">YY棋牌</div>
    <div class="tab r2" style="left:613px;width:76px">FB体育</div>
    <div class="tab r2" style="left:689px;width:89px">特兔棋牌</div>
    <div class="tab r2" style="left:778px;width:77px">IM体育</div>
  </div>

  <div id="filter">
    <div class="lcell"><svg class="abs" style="left:27px;top:35px" width="34" height="34" viewBox="0 0 34 34"><circle cx="14.4" cy="14" r="10.6" fill="none" stroke="#c6c6c6" stroke-width="3.2"/><path d="M22.4 22 L29.6 29" stroke="#c6c6c6" stroke-width="4.2" stroke-linecap="round"/><path d="M8.4 12 C9 9.4 11.4 7.6 14 7.6" fill="none" stroke="#e2e2e2" stroke-width="1.2"/></svg>
    <div class="abs" style="left:0;top:71px;width:89px;text-align:center;font-size:16px;font-weight:bold;color:#d2d2d2;line-height:20px;text-shadow:0 1px 0 #fff">查询</div>
</div>
    <div class="dash"></div>
    <div class="lbl" style="left:101px;top:19px">日期：</div>
    <div class="pill" style="left:155px;color:#ee6b2a;font-weight:bold">今日</div>
    <div class="pill" style="left:229px">近三日</div>
    <div class="pill" style="left:303px">近七日</div>
    <div class="inp" style="left:394px">2023-07-05 00:00:00<svg class="cal" width="16" height="19" viewBox="0 0 16 19"><rect x="0" y="3" width="16" height="5.4" fill="#b4b4b4"/><rect x="0" y="8.4" width="16" height="10" fill="#ececec"/><path d="M1.2 8.4 V18.4 M3.9 8.4 V18.4 M6.6 8.4 V18.4 M9.3 8.4 V18.4 M12 8.4 V18.4 M14.7 8.4 V18.4" stroke="#c9c9c9" stroke-width="1.2"/><rect x="3" y="0.6" width="2.4" height="4.6" rx="1" fill="#a9a9a9"/><rect x="10.6" y="0.6" width="2.4" height="4.6" rx="1" fill="#a9a9a9"/></svg></div>
    <div class="lbl" style="left:598px;top:19px">至</div>
    <div class="inp" style="left:627px">2023-07-05 13:51:29<svg class="cal" width="16" height="19" viewBox="0 0 16 19"><rect x="0" y="3" width="16" height="5.4" fill="#b4b4b4"/><rect x="0" y="8.4" width="16" height="10" fill="#ececec"/><path d="M1.2 8.4 V18.4 M3.9 8.4 V18.4 M6.6 8.4 V18.4 M9.3 8.4 V18.4 M12 8.4 V18.4 M14.7 8.4 V18.4" stroke="#c9c9c9" stroke-width="1.2"/><rect x="3" y="0.6" width="2.4" height="4.6" rx="1" fill="#a9a9a9"/><rect x="10.6" y="0.6" width="2.4" height="4.6" rx="1" fill="#a9a9a9"/></svg></div>
    <div class="lbl" style="left:100px;top:82px">类型：</div>
    <div class="cb" style="left:154px"><svg width="16" height="16" viewBox="0 0 16 16" style="position:absolute;left:0;top:0"><path d="M1.4 9.4 L6 13.4 L15.4 2.4" fill="none" stroke="#cdcdcd" stroke-width="1.5"/></svg></div>
    <div class="lbl" style="left:178px;top:82px">充值</div>
    <div class="cb" style="left:227px"><svg width="16" height="16" viewBox="0 0 16 16" style="position:absolute;left:0;top:0"><path d="M1.4 9.4 L6 13.4 L15.4 2.4" fill="none" stroke="#cdcdcd" stroke-width="1.5"/></svg></div>
    <div class="lbl" style="left:252px;top:82px">提现</div>
    <div id="ok">确定</div>
  </div>

  <table id="tbl">
    <colgroup><col style="width:326px"><col style="width:292px"><col style="width:66px"><col style="width:152px"><col style="width:130px"><col style="width:92px"><col style="width:67px"></colgroup>
    <tr><th>账变编号</th><th>充提时间</th><th>类型</th><th>金额/元</th><th>余额</th><th>状态</th><th>备注</th></tr>
    <tr><td>20230705VBBGIHDFDF</td><td>2023-07-05 13:47:50</td><td>充值</td><td style="color:#c8161d">+401.0000</td><td>401.0010</td><td style="color:#2aa12a">已到账</td><td>-----</td></tr>
  </table>

  <div class="abs" style="left:780px;top:376px;width:318px;text-align:right;font-size:13px;line-height:18px;color:#666;white-space:nowrap">总计 1 个记录, 分为 1 页, 当前第 1 页</div>
  <div class="abs" style="left:1107px;top:369px;width:31px;height:32px;background:#f5821f;border-radius:3px;color:#fff;font-size:14px;line-height:32px;text-align:center">1</div>
</div>

<!-- WATERMARK -->
<div id="wm" class="abs" style="left:1640px;top:40px;width:280px;height:112px">
  <svg class="abs" style="left:0;top:0" width="280" height="112" viewBox="0 0 280 112">
    <rect x="6.5" y="50" width="267" height="57" rx="22" fill="none" stroke="#fff" stroke-width="6" opacity=".9"/>
    <rect x="6.5" y="50" width="267" height="57" rx="22" fill="none" stroke="#bdbdbd" stroke-width="2.6"/>
    <g fill="#fff" stroke="#fff" opacity=".85" transform="translate(0 0)"><g stroke-width="3"><path d="M55 50.4 C61 42 74 35.6 89.6 37.2 C86 39.6 86.6 42 91 43.4 C95.6 44.8 97.6 47 97.6 50 C90 49.4 84.6 51.4 80.6 56.4 C76 54.2 70.6 55 66 52.8 C62 52.6 58 51.6 55 50.4 Z"/></g><g transform="translate(280 0) scale(-1 1)" stroke-width="3"><path d="M55 50.4 C61 42 74 35.6 89.6 37.2 C86 39.6 86.6 42 91 43.4 C95.6 44.8 97.6 47 97.6 50 C90 49.4 84.6 51.4 80.6 56.4 C76 54.2 70.6 55 66 52.8 C62 52.6 58 51.6 55 50.4 Z"/></g></g>
    <g fill="#bcbcbc" stroke="#bcbcbc"><path d="M57 49 C49 51 42 47 43.6 41.6 C45 37.4 51.6 38 51.8 42 C51.8 45 48 45.4 47.6 43" fill="none" stroke-width="2.4" stroke-linecap="round"/>
      <path d="M55 50.4 C61 42 74 35.6 89.6 37.2 C86 39.6 86.6 42 91 43.4 C95.6 44.8 97.6 47 97.6 50 C90 49.4 84.6 51.4 80.6 56.4 C76 54.2 70.6 55 66 52.8 C62 52.6 58 51.6 55 50.4 Z" stroke="none"/>
      <path d="M79.6 55 C83 60.6 90.4 61 89.6 56.4 C89 53.6 85.4 54.2 86 56.6" fill="none" stroke-width="2" stroke-linecap="round"/>
      <path d="M121 48.6 C109 51.4 98 45.4 97.6 37.4 C97.4 30.8 106.4 29.8 107.4 35 C107.8 38.4 103 39.4 102 36.4" fill="none" stroke-width="3" stroke-linecap="round"/>
      <path d="M105 30.6 C111 32.8 118.4 27 116 17.6" fill="none" stroke-width="2.3" stroke-linecap="round"/>
      <ellipse cx="120.6" cy="21.6" rx="1.5" ry="3.4" transform="rotate(28 120.6 21.6)" stroke="none"/>
      <ellipse cx="124.4" cy="27" rx="1.5" ry="3.4" transform="rotate(40 124.4 27)" stroke="none"/>
      <ellipse cx="112.6" cy="19.4" rx="1.3" ry="3" transform="rotate(-24 112.6 19.4)" stroke="none"/>
      <path d="M112 41 C117 35.6 125 36.6 128.6 43.4 M118 30 C123 31 126 35 125.6 39 M122 44.6 C126 41.6 130 42.6 133 46" fill="none" stroke-width="1"/></g>
    <g fill="#bcbcbc" stroke="#bcbcbc" transform="translate(280 0) scale(-1 1)"><path d="M57 49 C49 51 42 47 43.6 41.6 C45 37.4 51.6 38 51.8 42 C51.8 45 48 45.4 47.6 43" fill="none" stroke-width="2.4" stroke-linecap="round"/>
      <path d="M55 50.4 C61 42 74 35.6 89.6 37.2 C86 39.6 86.6 42 91 43.4 C95.6 44.8 97.6 47 97.6 50 C90 49.4 84.6 51.4 80.6 56.4 C76 54.2 70.6 55 66 52.8 C62 52.6 58 51.6 55 50.4 Z" stroke="none"/>
      <path d="M79.6 55 C83 60.6 90.4 61 89.6 56.4 C89 53.6 85.4 54.2 86 56.6" fill="none" stroke-width="2" stroke-linecap="round"/>
      <path d="M121 48.6 C109 51.4 98 45.4 97.6 37.4 C97.4 30.8 106.4 29.8 107.4 35 C107.8 38.4 103 39.4 102 36.4" fill="none" stroke-width="3" stroke-linecap="round"/>
      <path d="M105 30.6 C111 32.8 118.4 27 116 17.6" fill="none" stroke-width="2.3" stroke-linecap="round"/>
      <ellipse cx="120.6" cy="21.6" rx="1.5" ry="3.4" transform="rotate(28 120.6 21.6)" stroke="none"/>
      <ellipse cx="124.4" cy="27" rx="1.5" ry="3.4" transform="rotate(40 124.4 27)" stroke="none"/>
      <ellipse cx="112.6" cy="19.4" rx="1.3" ry="3" transform="rotate(-24 112.6 19.4)" stroke="none"/>
      <path d="M112 41 C117 35.6 125 36.6 128.6 43.4 M118 30 C123 31 126 35 125.6 39 M122 44.6 C126 41.6 130 42.6 133 46" fill="none" stroke-width="1"/></g>
    <circle cx="140" cy="46.4" r="9" fill="#f8f8f8" opacity=".8"/>
    <g fill="#bcbcbc"><ellipse cx="140.0" cy="39.6" rx="5.5" ry="1.3" transform="rotate(-90 140.0 39.6)"/><ellipse cx="144.3" cy="40.3" rx="6.0" ry="1.4" transform="rotate(-55 144.3 40.3)"/><ellipse cx="135.7" cy="40.3" rx="6.0" ry="1.4" transform="rotate(-125 135.7 40.3)"/><ellipse cx="145.8" cy="44.3" rx="5.0" ry="1.3" transform="rotate(-20 145.8 44.3)"/><ellipse cx="134.2" cy="44.3" rx="5.0" ry="1.3" transform="rotate(-160 134.2 44.3)"/><ellipse cx="144.6" cy="49.6" rx="4.5" ry="1.1" transform="rotate(35 144.6 49.6)"/><ellipse cx="135.4" cy="49.6" rx="4.5" ry="1.1" transform="rotate(145 135.4 49.6)"/><ellipse cx="142.0" cy="51.9" rx="4.8" ry="1.1" transform="rotate(70 142.0 51.9)"/><ellipse cx="138.0" cy="51.9" rx="4.8" ry="1.1" transform="rotate(110 138.0 51.9)"/><ellipse cx="140.0" cy="50.7" rx="3.5" ry="1.0" transform="rotate(90 140.0 50.7)"/></g>
  </svg>
  <div class="wmt" style="left:44px;top:8px;font-size:26.5px;line-height:30px;-webkit-text-stroke:.9px #bababa">杏吧</div>
  <div class="wmt" style="left:182px;top:8px;font-size:26.5px;line-height:30px;-webkit-text-stroke:.9px #bababa">论坛</div>
  <div class="wmt" style="left:17px;top:60px;font-size:37px;line-height:46px;transform-origin:0 50%;transform:scaleX(1.115);-webkit-text-stroke:1.1px #bababa">回家015.com</div>
</div>
<!-- SIDEBAR -->
<div class="sb" style="top:210px"><svg width="20" height="20" viewBox="0 0 20 20"><circle cx="10" cy="10" r="8.4" fill="none" stroke="#a8679b" stroke-width="1.7"/><path d="M10 4.8 L14.4 9.6 H11.6 V14.6 H8.4 V9.6 H5.6 Z" fill="#a8679b"/></svg><span>首页</span></div>
<div class="sb" style="top:269px"><svg width="20" height="20" viewBox="0 0 20 20"><path d="M2.2 13 V10 A7.8 7.8 0 0 1 17.8 10 V13" fill="none" stroke="#a8679b" stroke-width="1.9"/><rect x="3.4" y="10.4" width="4" height="7" rx="1.8" fill="#a8679b"/><rect x="12.6" y="10.4" width="4" height="7" rx="1.8" fill="#a8679b"/></svg><span>客服</span></div>
<div class="sb" style="top:328px"><svg width="20" height="20" viewBox="0 0 20 20"><path d="M16.4 5 A7.4 7.4 0 1 0 16.4 15" fill="none" stroke="#dd66ad" stroke-width="3.1"/><path d="M13.6 12.4 L19.2 13.6 L16.2 18 Z" fill="#dd66ad"/><rect x="8" y="6" width="4.6" height="8" rx="2.3" fill="none" stroke="#dd66ad" stroke-width="1.9"/></svg><span>IM充值</span></div>
<div class="sb" style="top:387px"><svg width="20" height="20" viewBox="0 0 20 20"><path d="M10.6 2.6 C15.4 2.6 18.6 5.2 18.6 8.6 C18.6 12 15.4 14.6 10.6 14.6 C9.4 14.6 8.4 14.4 7.4 14.2 C6 15.8 4.2 16.8 2 17.2 C3.4 15.8 4 14.4 4 12.8 C3 11.6 2.6 10.2 2.6 8.6 C2.6 5.2 5.8 2.6 10.6 2.6 Z" fill="none" stroke="#a8679b" stroke-width="1.6" stroke-linejoin="round"/><circle cx="7.2" cy="8.6" r="1.1" fill="#a8679b"/><circle cx="10.6" cy="8.6" r="1.1" fill="#a8679b"/><circle cx="14" cy="8.6" r="1.1" fill="#a8679b"/></svg><span>聊天</span></div>
<div class="sb" style="top:446px"><svg width="20" height="20" viewBox="0 0 20 20"><circle cx="10" cy="10" r="9.2" fill="#a8679b"/><rect x="8.5" y="4.4" width="3" height="7.6" rx="1" fill="#fff"/><rect x="8.5" y="13.2" width="3" height="2.8" rx=".8" fill="#fff"/></svg><span>疑问</span></div>
<div class="sb" style="top:505px"><svg width="20" height="20" viewBox="0 0 20 20"><path d="M1.4 7 H4.6 L9.6 3 V17 L4.6 13 H1.4 Z" fill="#a8679b"/><path d="M12.8 7.4 L18 12.6 M18 7.4 L12.8 12.6" stroke="#a8679b" stroke-width="2"/></svg><span>声音</span></div>
<div class="sb" style="top:564px"><svg viewBox="0 0 22 20" style="width:23px;height:21px;margin-left:-11.5px;top:6px"><path d="M5.4 2 H16.6 L20.6 7.2 L11 18.4 L1.4 7.2 Z M1.4 7.2 H20.6 M5.4 2 L7.6 7.2 L11 18.4 L14.4 7.2 L16.6 2 M7.6 7.2 L11 2 L14.4 7.2" fill="none" stroke="#a8679b" stroke-width="1.4" stroke-linejoin="round"/></svg><span>挂机</span></div>

<!-- scroll indicator + pink strip -->
<div class="abs" style="left:1907px;top:201px;width:9px;height:73px;z-index:5;border-radius:5px;background:linear-gradient(#a9a9a9 0,#a9a9a9 40%,#2fc667 42%,#35cf6d 80%,#7be28f 100%)"></div>
<div class="abs" style="left:1912px;top:0;width:5px;height:929px;background:linear-gradient(90deg,rgba(253,243,251,0),#fdf1fb 60%,#fdeefb)"></div>
<div class="abs" style="left:1917px;top:0;width:3px;height:868px;z-index:6;background:linear-gradient(90deg,#ba68a2 0,#ba68a2 33%,#dd61af 34%)"></div>
<div class="abs" style="left:1917px;top:868px;width:3px;height:97px;z-index:6;background:#fff"></div>

<!-- footer -->
<div class="abs" style="left:0;top:928px;width:1917px;height:1px;background:#fbf8fc"></div>
<div class="abs" style="left:0;top:929px;width:1917px;height:36px;background:linear-gradient(#2f1740 0,#2f1740 91%,#2c2238 92%)"></div>
<div class="abs" style="left:315px;top:963px;width:60px;height:2px;background:#5d5466"></div><div class="abs" style="left:453px;top:963px;width:29px;height:2px;background:#7b7384"></div>
</body>
</html>
